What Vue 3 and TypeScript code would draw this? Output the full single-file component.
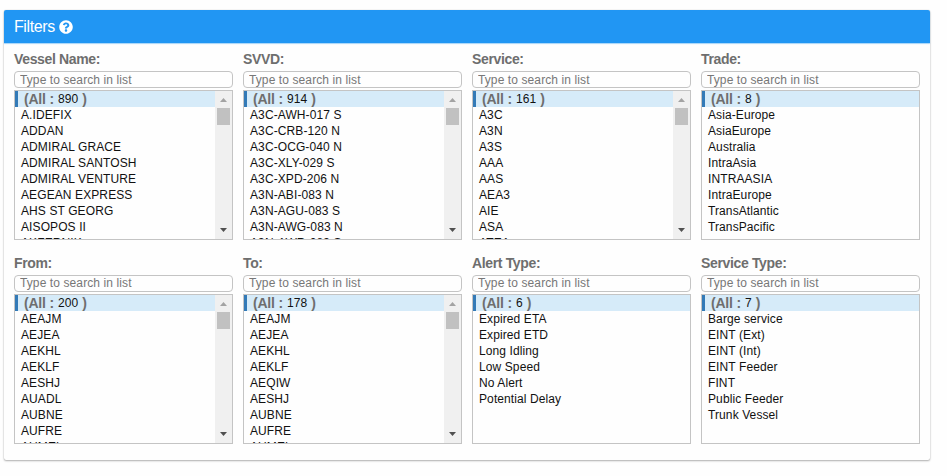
<script setup lang="ts">
interface FilterList {
  label: string
  total: number
  items: string[]
  scroll?: boolean
}

const filters: FilterList[] = [
  {
    label: 'Vessel Name:',
    total: 890,
    scroll: true,
    items: ['A.IDEFIX', 'ADDAN', 'ADMIRAL GRACE', 'ADMIRAL SANTOSH', 'ADMIRAL VENTURE', 'AEGEAN EXPRESS', 'AHS ST GEORG', 'AISOPOS II', 'AKFERNIK'],
  },
  {
    label: 'SVVD:',
    total: 914,
    scroll: true,
    items: ['A3C-AWH-017 S', 'A3C-CRB-120 N', 'A3C-OCG-040 N', 'A3C-XLY-029 S', 'A3C-XPD-206 N', 'A3N-ABI-083 N', 'A3N-AGU-083 S', 'A3N-AWG-083 N', 'A3N-AWR-083 S'],
  },
  {
    label: 'Service:',
    total: 161,
    scroll: true,
    items: ['A3C', 'A3N', 'A3S', 'AAA', 'AAS', 'AEA3', 'AIE', 'ASA', 'ATEA'],
  },
  {
    label: 'Trade:',
    total: 8,
    items: ['Asia-Europe', 'AsiaEurope', 'Australia', 'IntraAsia', 'INTRAASIA', 'IntraEurope', 'TransAtlantic', 'TransPacific'],
  },
  {
    label: 'From:',
    total: 200,
    scroll: true,
    items: ['AEAJM', 'AEJEA', 'AEKHL', 'AEKLF', 'AESHJ', 'AUADL', 'AUBNE', 'AUFRE', 'AUMEL'],
  },
  {
    label: 'To:',
    total: 178,
    scroll: true,
    items: ['AEAJM', 'AEJEA', 'AEKHL', 'AEKLF', 'AEQIW', 'AESHJ', 'AUBNE', 'AUFRE', 'AUMEL'],
  },
  {
    label: 'Alert Type:',
    total: 6,
    items: ['Expired ETA', 'Expired ETD', 'Long Idling', 'Low Speed', 'No Alert', 'Potential Delay'],
  },
  {
    label: 'Service Type:',
    total: 7,
    items: ['Barge service', 'EINT (Ext)', 'EINT (Int)', 'EINT Feeder', 'FINT', 'Public Feeder', 'Trunk Vessel'],
  },
]
</script>

<template>
  <main class="page">
    <section class="panel">
      <header class="panel-header">
        <span>Filters</span>
        <svg class="help" viewBox="0 0 512 512" aria-hidden="true">
          <path
            fill="#fff"
            d="M504 256c0 137-111 248-248 248S8 393 8 256 119 8 256 8s248 111 248 248zM262.700 90c-54.500 0-89.300 23-116.500 63.800-3.500 5.300-2.400 12.400 2.700 16.300l34.700 26.300c5.200 3.900 12.600 3 16.700-2.100 17.900-22.700 30.100-35.800 57.300-35.800 20.400 0 45.700 13.100 45.700 33 0 15-12.400 22.700-32.500 34C247.100 238.500 216 254.900 216 296v4c0 6.600 5.400 12 12 12h56c6.600 0 12-5.400 12-12v-1.300c0-28.500 83.200-29.600 83.200-106.700 0-58-60.200-102-116.500-102zM256 338c-25.400 0-46 20.600-46 46s20.600 46 46 46 46-20.600 46-46-20.600-46-46-46z"
          />
        </svg>
      </header>
      <div class="grid">
        <div v-for="f in filters" :key="f.label" class="filter">
          <label class="label">{{ f.label }}</label>
          <input class="search" type="text" placeholder="Type to search in list" />
          <div class="list">
            <div class="options">
              <div class="option all"><b>(All :</b><span class="total">{{ f.total }}</span><b>)</b></div>
              <div v-for="item in f.items" :key="item" class="option">{{ item }}</div>
            </div>
            <div v-if="f.scroll" class="scrollbar">
              <svg class="arrow" viewBox="0 0 17 17"><path fill="#a3a3a3" d="M5 11h7L8.500 7z" /></svg>
              <div class="thumb"></div>
              <svg class="arrow down" viewBox="0 0 17 17"><path fill="#505050" d="M5 6h7L8.500 10z" /></svg>
            </div>
          </div>
        </div>
      </div>
    </section>
  </main>
</template>

<style>
body {
  background: #fefefe;
}
</style>

<style scoped>
.page {
  box-sizing: border-box;
  height: 476px;
  padding: 10px 17px 16px 4px;
  font-family: "Liberation Sans", Arial, sans-serif;
  overflow: hidden;
}
.panel {
  height: 450px;
  width: 926px;
  background: #fefefe;
  border-radius: 2px;
  box-shadow: 0 1px 2px rgba(0, 0, 0, 0.3), 0 0 1px rgba(0, 0, 0, 0.25);
}
.panel-header {
  display: flex;
  align-items: center;
  gap: 4px;
  height: 33px;
  padding-left: 10px;
  background: #2196f3;
  border-radius: 2px 2px 0 0;
  box-shadow: 0 1px 1px rgba(33, 150, 243, 0.4);
  color: #fff;
  font-size: 16px;
  letter-spacing: -0.4px;
}
.help {
  width: 14px;
  height: 14px;
}
.grid {
  display: grid;
  grid-template-columns: repeat(4, 219px);
  grid-auto-rows: 190px;
  gap: 14px 10px;
  padding: 7px 10px 0;
}
.filter {
  display: flex;
  flex-direction: column;
}
.label {
  height: 21px;
  line-height: 19px;
  font-size: 14px;
  font-weight: bold;
  letter-spacing: -0.35px;
  color: #6e6e6e;
}
.search {
  box-sizing: border-box;
  width: 219px;
  height: 17px;
  margin: 0 0 2px;
  padding: 0 5px;
  border: 1px solid #c4c4c4;
  border-radius: 4px;
  background: #fefefe;
  font-family: inherit;
  font-size: 12px;
  letter-spacing: 0.1px;
  outline: none;
}
.filter:nth-child(n + 5) .search {
  padding-bottom: 2px;
}
.search::placeholder {
  color: #777;
}
.list {
  box-sizing: border-box;
  display: flex;
  height: 150px;
  border: 1px solid #c4c4c4;
  overflow: hidden;
}
.options {
  flex: 1;
  min-width: 0;
}
.option {
  height: 16px;
  padding-left: 6px;
  line-height: 16px;
  font-size: 12px;
  letter-spacing: 0.1px;
  color: #111;
  white-space: nowrap;
}
.all {
  display: flex;
  gap: 4px;
  border-left: 3px solid #337ab7;
  background: #d6ebf9;
}
.all b {
  font-size: 14px;
  letter-spacing: -0.2px;
  color: #6e6e6e;
}
.scrollbar {
  display: flex;
  flex-direction: column;
  align-items: center;
  width: 17px;
  background: #f0f0f0;
}
.arrow {
  width: 17px;
  height: 17px;
}
.thumb {
  width: 13px;
  height: 17px;
  background: #c1c1c1;
}
.down {
  margin-top: auto;
}
</style>
